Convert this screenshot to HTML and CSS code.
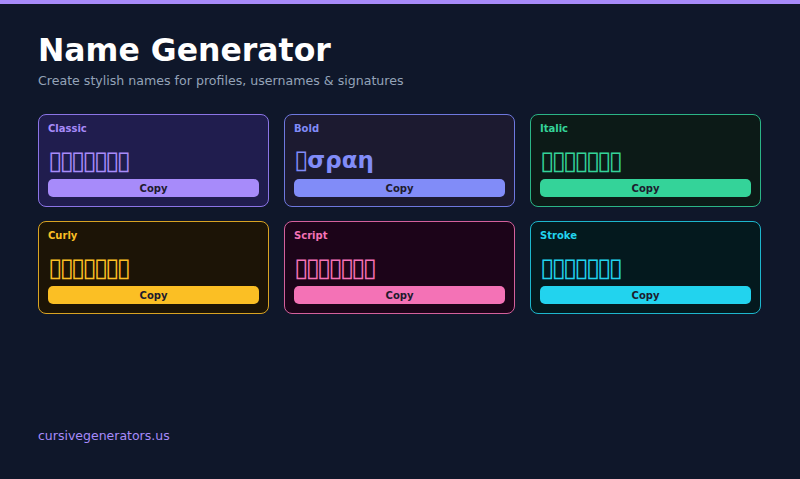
FILE: index.html
```html
<!DOCTYPE html>
<html lang="en">
<head>
  <meta charset="UTF-8">
  <title>Name Generator</title>
  <link rel="stylesheet" href="styles.css">
</head>
<body>
  <div class="top-bar"></div>

  <main class="page">
    <header class="intro">
      <h1>Name Generator</h1>
      <p>Create stylish names for profiles, usernames &amp; signatures</p>
    </header>

    <section class="styles-grid">
      <div class="style-card classic">
        <span class="style-label">Classic</span>
        <div class="style-name">▯▯▯▯▯▯▯</div>
        <button class="copy-btn">Copy</button>
      </div>

      <div class="style-card bold">
        <span class="style-label">Bold</span>
        <div class="style-name"><span class="missing">▯</span>σραη</div>
        <button class="copy-btn">Copy</button>
      </div>

      <div class="style-card italic">
        <span class="style-label">Italic</span>
        <div class="style-name">▯▯▯▯▯▯▯</div>
        <button class="copy-btn">Copy</button>
      </div>

      <div class="style-card curly">
        <span class="style-label">Curly</span>
        <div class="style-name">▯▯▯▯▯▯▯</div>
        <button class="copy-btn">Copy</button>
      </div>

      <div class="style-card script">
        <span class="style-label">Script</span>
        <div class="style-name">▯▯▯▯▯▯▯</div>
        <button class="copy-btn">Copy</button>
      </div>

      <div class="style-card stroke">
        <span class="style-label">Stroke</span>
        <div class="style-name">▯▯▯▯▯▯▯</div>
        <button class="copy-btn">Copy</button>
      </div>
    </section>
  </main>

  <footer class="site-footer">cursivegenerators.us</footer>
</body>
</html>
```

FILE: styles.css
```css
body {
    margin: 0;
    padding: 0;
    font-family: "DejaVu Sans", sans-serif;
    background: #0f172a;
    color: #fff;
    min-height: 100vh;
    display: flex;
    flex-direction: column;
}

.top-bar {
    height: 4px;
    background: #a78bfa;
}

.page {
    padding: 26px 39px 0 38px;
}

.intro h1 {
    margin: 0;
    font-size: 31.5px;
    line-height: 40px;
    font-weight: bold;
    color: #fff;
}

.intro p {
    margin: 3px 0 0 0;
    font-size: 12.6px;
    line-height: 16px;
    color: #94a3b8;
}

.styles-grid {
    display: grid;
    grid-template-columns: repeat(3, 1fr);
    gap: 14px 15px;
    margin-top: 25px;
}

.style-card {
    border: 1px solid;
    border-radius: 8px;
    padding: 8px 9px 9px 9px;
    display: flex;
    flex-direction: column;
}

.style-label {
    font-size: 10px;
    line-height: 12px;
    font-weight: bold;
}

.style-name {
    height: 28px;
    font-size: 26px;
    line-height: 28px;
    letter-spacing: -2.9px;
    margin-top: 11px;
    white-space: nowrap;
}

.bold .style-name {
    font-size: 23px;
    letter-spacing: 0;
    font-weight: bold;
}

.bold .missing {
    font-size: 26px;
    line-height: 1;
    letter-spacing: -1px;
    font-weight: normal;
}

.copy-btn {
    margin-top: 5px;
    height: 18px;
    padding: 0;
    border: none;
    border-radius: 5px;
    font-family: inherit;
    font-size: 10px;
    font-weight: bold;
    color: #1e1b2e;
    cursor: pointer;
}

.classic { background: #201d4e; border-color: #8b74e6; color: #a78bfa; }
.classic .copy-btn { background: #a78bfa; }

.bold { background: #1c1a30; border-color: #6e78de; color: #818cf8; }
.bold .copy-btn { background: #818cf8; }

.italic { background: #0c1a17; border-color: #2bb486; color: #34d399; }
.italic .copy-btn { background: #34d399; }

.curly { background: #1c1406; border-color: #d9a322; color: #fbbf24; }
.curly .copy-btn { background: #fbbf24; }

.script { background: #1c0419; border-color: #d4609c; color: #f472b6; }
.script .copy-btn { background: #f472b6; }

.stroke { background: #04191e; border-color: #1db6cd; color: #22d3ee; }
.stroke .copy-btn { background: #22d3ee; }

.site-footer {
    margin-top: auto;
    padding: 0 38px 35px 38px;
    font-size: 12.5px;
    line-height: 16px;
    color: #a78bfa;
}
```
